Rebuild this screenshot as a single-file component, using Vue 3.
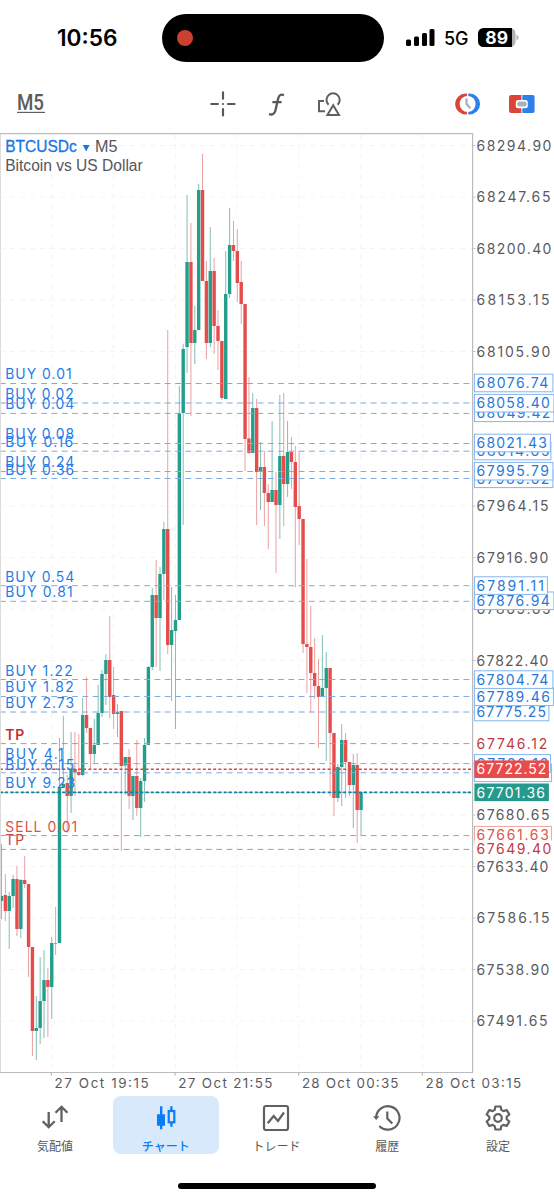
<script setup>
const STEP = 3.866
// direction, high, body top, body bottom, low
const raw = [
  ['g',844,896,901,919],['r',874,895,911,921],['g',892,896,911,949],['g',875,879,896,908],['r',866,879,929,936],
  ['g',879,880,929,938],['r',856,880,884,888],['r',884,884,947,977],['r',947,947,1031,1056],['g',996,1028,1031,1060],
  ['g',957,1001,1028,1044],['g',950,980,1001,1038],['r',968,980,987,1037],['g',937,943,987,1019],['r',907,943,943.6,955],
  ['g',738,787,943,943],['g',716,784,787,787],['r',775,783,796,833],['g',732,769,796,813],['r',732,769,772,796],
  ['r',734,772,775,776],['g',698,715,775,776],['r',677,715,728,733],['r',728,728,754,769],['g',719,745,754,763],
  ['g',685,713,745,745],['g',670,674,713,717],['g',654,660,674,705],['r',616,660,697,718],['r',667,695,714,729],
  ['g',704,712,714,737],['r',711,711,766,851],['g',757,757,765.5,795],['r',749,757,796,809],['g',776,776,796,820],
  ['r',740,776,808,816],['g',778,781,808,837],['g',738,745,781,802],['g',666,667,745,745],['g',588,595,667,670],
  ['r',560,595,618,667],['g',567,574,618,671],['g',522,529,574,600],['r',330,529,645,654],['g',587,630,645,701],
  ['g',595,620,631,729],['g',386,413,620,620],['g',344,349,413,525],['g',195,262,347,373],['r',223,262,343,416],
  ['g',306,330,343,364],['g',184,190,330,330],['r',154,190,281,281],['r',261,281,343,359],['g',227,271,343,347],
  ['r',258,271,326,354],['r',310,326,341,370],['r',341,341,398,400],['g',251,294,399,399],['g',208,245,294,298],
  ['r',221,245,251,261],['r',229,251,283,302],['r',261,282,304,324],['r',304,304,439,471],['r',377,438.5,453,454],
  ['g',393,408,453,453],['r',399,408,472,525],['g',442,467,472,510],['r',451,467,493,526],['r',484,493,502,549],
  ['g',421,490,502,502],['r',472,490,505,573],['g',395,456,505,539],['r',393,456,484,526],['g',421,452,484,497],
  ['r',437,452,462,489],['r',446,462,507,587],['r',451,506,519,545],['r',519,519,644,653],['r',559,644,647,693],
  ['r',606,647,673,712],['r',638,673,686,699],['r',659,686,697,748],['g',635,688,697,697],['g',652,668,688,761],
  ['r',668,668,733,796],['r',733,733,798,816],['g',764,767,798,802],['g',724,740,767,806],['r',733,740,762,798],
  ['r',762,762,785,796],['g',754,765,785,828],['r',753,765,810,843],['g',792,792,810,835]
]
const candles = raw.map(([d, h, t, b, l], i) => ({ d, h, t, b, l, x: 1.5 + i * STEP }))

const gridY = Array.from({ length: 18 }, (_, i) => 145.5 + i * 51.5)
const gridX = Array.from({ length: 7 }, (_, i) => 51.6 + i * 61.83)

const axis = [
  [145.5,'68294.90',74],[197,'68247.65',73],[248.5,'68200.40',74],[300,'68153.15',72],[351.5,'68105.90',73],
  [506,'67964.15',71],[557.5,'67916.90',71],[609,'67869.65',73],[660.5,'67822.40',71],[815,'67680.65',72],
  [866.5,'67633.40',71],[918,'67586.15',72],[969.5,'67538.90',72],[1021,'67491.65',70]
]
const times = [[54.6,94,'27 Oct 19:15'],[178.3,94,'27 Oct 21:55'],[302,96.5,'28 Oct 00:35'],[425.6,95.5,'28 Oct 03:15']]

const orders = [
  [383.5,'BUY 0.01',66.5,379],[403,'BUY 0.02',68.5,399.3],[413.4,'BUY 0.04',69,409],[443.5,'BUY 0.08',69,439],
  [451.2,'BUY 0.16',68,447],[471.5,'BUY 0.24',69,467],[478.5,'BUY 0.36',69,475],[585.7,'BUY 0.54',69,581.5],
  [601.3,'BUY 0.81',67.5,597],[679.5,'BUY 1.22',67.5,676],[696.5,'BUY 1.82',68.5,692],[712,'BUY 2.73',69,708],
  [763.6,'BUY 4.1',58.5,759],[772.8,'BUY 6.15',69,769.5],[792.4,'BUY 9.23',70,788]
]
const stops = [[743.6,'TP',19,739.5,'bold'],[835.6,'SELL 0.01',72,831.5,'sell'],[849.4,'TP',19,844.7,'']]

const tags = [
  [835.2,'67661.63',71.5,77,'sell'],[772.8,'67719.45',72,77,'buy'],[763.4,'67728.18',71,76,'buy'],
  [712,'67775.25',68.5,74.5,'buy'],[696.8,'67789.46',72.5,79,'buy'],[679.6,'67804.74',71,78.5,'buy'],
  [600.8,'67876.94',72.5,79.5,'buy'],[585.6,'67891.11',66.5,73,'buy'],[478.8,'67989.62',72,78.5,'buy'],
  [471.2,'67995.79',71.5,78.5,'buy'],[451,'68014.65',72,76.5,'buy'],[443,'68021.43',69.5,76,'buy'],
  [412.8,'68049.42',73,79.5,'buy'],[403.2,'68058.40',72.5,79.5,'buy'],[383,'68076.74',71,78.5,'buy'],
  [849.2,'67649.40',74,79,'plain'],[743.5,'67746.12',70,76,'plain'],[792.3,'67701.36',67.5,74.5,'bid'],[769.2,'67722.52',69,74.5,'ask']
]
const gear = 'M10.4 1.5h5.2l.7 3.4 2.1 1.2 3.3-1.1 2.6 4.5-2.6 2.3v2.4l2.6 2.3-2.6 4.5-3.3-1.1-2.1 1.2-.7 3.4h-5.2l-.7-3.4-2.1-1.2L4.3 21l-2.6-4.5 2.6-2.3v-2.4L1.7 9.5 4.3 5l3.3 1.1 2.1-1.2z'
</script>

<template>
  <main class="screen">
    <header class="status">
      <svg class="clock" width="64" height="24"><text x="0" y="19.8" textLength="60.5" lengthAdjust="spacingAndGlyphs">10:56</text></svg>
      <div class="island"><i></i></div>
      <svg class="signal" width="30" height="20"><rect x="0" y="12.5" width="5" height="6.5" rx="1.5"/><rect x="8" y="9.5" width="5" height="9.5" rx="1.5"/><rect x="16" y="6" width="5" height="13" rx="1.5"/><rect x="23.5" y="2" width="5" height="17" rx="1.5"/></svg>
      <svg class="net" width="26" height="20"><text x="0" y="15.8" textLength="24.5" lengthAdjust="spacingAndGlyphs">5G</text></svg>
      <svg class="battery" width="42" height="20"><path d="M31 0h1a5.5 5.5 0 0 1 5.5 5.5v8A5.5 5.5 0 0 1 32 19h-1z" fill="#b2b2b4"/><path d="M5.5 0H34v19H5.5A5.5 5.5 0 0 1 0 13.5v-8A5.5 5.5 0 0 1 5.5 0z"/><path d="M38.5 6.5q2 .8 2 3t-2 3z" fill="#b2b2b4"/><text x="7.3" y="15.8" textLength="22.7" lengthAdjust="spacingAndGlyphs">89</text></svg>
    </header>

    <nav class="tools">
      <svg class="frame" width="30" height="28"><text x="0" y="20" textLength="27" lengthAdjust="spacingAndGlyphs">M5</text><path d="M0 22.4h28" stroke="#606060" stroke-width="1.2"/></svg>
      <svg class="cross" width="28" height="28" fill="none" stroke="#58585a" stroke-width="2.2" stroke-linecap="round"><path d="M14 2.4v6.3M14 19.2v6.3M2.3 14h6.6M19 14h6.6"/><circle cx="14" cy="14" r="1.1" fill="#58585a" stroke="none"/></svg>
      <svg class="func" width="20" height="28" fill="none" stroke="#58585a" stroke-width="2.3"><path d="M16 5.1q-4.4-1.6-5.7 3L7.4 20.5q-1.2 5.2-6.4 3.6M4.4 12.2h9.2"/></svg>
      <svg class="shapes" width="28" height="28" fill="none" stroke="#606062" stroke-width="2"><path d="M8 11H3v10.3h6"/><path d="M12.6 14.8a6.6 6.6 0 1 1 9 0"/><path d="M17.2 15.2 23 25H11.4z"/></svg>
      <svg class="timer" width="28" height="28" fill="none"><path d="M12.9 3.6h-1.4a10.4 10.4 0 0 0 0 20.8h1.4" fill="#dc4439"/><path d="M14.3 3.6h1.4a10.4 10.4 0 0 1 0 20.8h-1.4z" fill="#2f80ea"/><circle cx="13.6" cy="14" r="8" fill="#fff"/><path d="M12.5 8.5v5.3l3.8 4.6" stroke="#a5b0ba" stroke-width="2.2"/></svg>
      <svg class="trade" width="28" height="28"><path d="M13.4 5H3.2Q1 5 1 7.2v13.6Q1 23 3.2 23h10.2z" fill="#dc4439"/><path d="M14.3 5h10.3q2 0 2 2v14q0 2-2 2H14.3z" fill="#2f80ea"/><rect x="7.8" y="10" width="12" height="8.2" rx="2.5" fill="#fff"/><rect x="9.2" y="11.6" width="9.4" height="5" rx="2" fill="#a5b3bf"/></svg>
    </nav>

    <svg class="chart" width="554" height="964" viewBox="0 130 554 964">
      <g class="grid">
        <path v-for="y in gridY" :key="'y' + y" :d="`M0 ${y}H472`" />
        <path v-for="x in gridX" :key="'x' + x" :d="`M${x} 134V1072`" />
      </g>
      <g v-for="(c, i) in candles" :key="i" :class="c.d">
        <path class="wick" :d="`M${c.x} ${c.h}V${c.l}`" />
        <rect :x="c.x - 1.7" :y="c.t" width="3.4" :height="c.b - c.t" />
      </g>
      <path v-for="o in orders" :key="'l' + o[0]" class="line buyline" :d="`M0 ${o[0]}H470`" />
      <path v-for="s in stops" :key="'s' + s[0]" class="line sellline" :d="`M0 ${s[0]}H470`" />
      <path class="dot ask" d="M0 769.3H472" />
      <path class="dot bid" d="M0 792.4H472" />
      <g class="label">
        <text v-for="o in orders" :key="'t' + o[0]" class="buytext" x="5.2" :y="o[3]" :textLength="o[2]">{{ o[1] }}</text>
        <text v-for="s in stops" :key="'u' + s[0]" class="stoptext" :class="s[4]" x="5.2" :y="s[3]" :textLength="s[2]">{{ s[1] }}</text>
      </g>
      <text class="symbol" x="5.2" y="152.2" textLength="71.5" lengthAdjust="spacingAndGlyphs">BTCUSDc</text>
      <path d="M82.8 145h6.8l-3.4 6.5z" fill="#1677e8" />
      <text class="caption" x="95" y="152.2" textLength="22.5" lengthAdjust="spacingAndGlyphs">M5</text>
      <text class="caption" x="5.2" y="171.2" textLength="137.5" lengthAdjust="spacingAndGlyphs">Bitcoin vs US Dollar</text>
      <path d="M.5 134V1072" stroke="#dcdcdc" fill="none" />
      <path d="M0 133.7H472.6V1072.5H0" stroke="#bcbcbe" stroke-width="1.2" fill="none" />
      <path v-for="y in gridY" :key="'k' + y" :d="`M473 ${y}h2.5`" stroke="#c4c4c6" />
      <text v-for="a in axis" :key="a[1]" class="axis" x="476.6" :y="a[0] + 5.2" :textLength="a[2] + 0.8">{{ a[1] }}</text>
      <g v-for="t in tags" :key="t[1]" class="tag" :class="t[4]">
        <rect x="474.4" :y="t[0] - 8.8" :width="t[3]" height="17.6" />
        <text class="axis" x="476.6" :y="t[0] + 5.2" :textLength="t[2] + 0.8">{{ t[1] }}</text>
      </g>
      <g v-for="t in times" :key="t[2]">
        <path :d="`M${t[0] - 3.3} 1073v2.6`" stroke="#a8a8aa" />
        <text class="time" :x="t[0]" y="1087.8" :textLength="t[1]">{{ t[2] }}</text>
      </g>
    </svg>

    <nav class="tabs">
      <a class="tab"><svg width="28" height="28" fill="none" stroke="#606062" stroke-width="2.3"><path d="M7.7 8v15M1.7 17.2l6 6 6-6M20.5 18V3M14.5 8.8l6-6 6 6"/></svg><span>気配値</span></a>
      <a class="tab active"><svg width="28" height="28"><path d="M8 2.2h2.4v8H13v11.6h-2.6v3.4H8v-3.4H5V10.2h3z" fill="#0a7cf4"/><path d="M19.4 2.2v5M19.4 18v4.7" stroke="#0a7cf4" stroke-width="2.3"/><rect x="16.7" y="7" width="5.6" height="11.3" fill="none" stroke="#0a7cf4" stroke-width="2.2"/></svg><span>チャート</span></a>
      <a class="tab"><svg width="28" height="28" fill="none" stroke="#606062" stroke-width="2.2"><rect x="2" y="2" width="24" height="24" rx="2"/><path d="M5.7 19.2l6-7.2 4.3 5 6-8.5"/></svg><span>トレード</span></a>
      <a class="tab"><svg width="28" height="28" fill="none" stroke="#606062" stroke-width="2.2"><path d="M3.1 14A11.7 11.7 0 1 1 6.3 22"/><path d="M14.3 7.5v7l5 5"/><path d="M0 12.2h6.4L3.2 16z" fill="#606062" stroke="none"/></svg><span>履歴</span></a>
      <a class="tab"><svg width="28" height="28" fill="none" stroke="#606062" stroke-width="2.2" stroke-linejoin="round"><g transform="translate(1 1)"><path :d="gear"/><circle cx="13" cy="13" r="3.8"/></g></svg><span>設定</span></a>
    </nav>
    <div class="home"></div>
  </main>
</template>

<style>
body { background: #fff; }
</style>
<style scoped>
.screen { width: 554px; height: 1200px; overflow: hidden; display: flex; flex-direction: column; background: #fff; font-family: Inter, "Noto Sans CJK JP", sans-serif; }
svg { flex: none; display: block; }
.status { height: 76px; flex: none; display: flex; align-items: center; box-sizing: border-box; padding-left: 57px; }
.clock text { font-size: 22.4px; font-weight: 600; }
.island { width: 222px; height: 48px; flex: none; margin-left: 41px; border-radius: 24px; background: #000; display: flex; align-items: center; }
.island i { width: 16px; height: 16px; margin-left: 15px; border-radius: 50%; background: #cc4032; }
.signal { margin-left: 22px; margin-top: -2px; }
.net { margin-left: 8px; margin-top: 2px; }
.net text { font-size: 18.4px; font-weight: 500; }
.battery { margin-left: 8px; margin-top: -1px; }
.battery text { font-size: 17.5px; font-weight: 700; fill: #fff; }
.tools { height: 54px; flex: none; display: flex; align-items: center; box-sizing: border-box; padding: 2px 0 0 17px; }
.frame text { font: 500 22px Roboto, sans-serif; fill: #5c5c5c; }
.cross { margin-left: 162px; }
.func { margin-left: 31px; }
.shapes { margin-left: 28px; }
.timer { margin-left: 110px; }
.trade { margin-left: 26px; }
.chart { font-family: Inter, sans-serif; }
.grid path { stroke: #f4f4f5; stroke-dasharray: 5 5; fill: none; }
.wick { stroke-width: 1; fill: none; }
.g rect { fill: #259d8b; }
.g .wick { stroke: #82bfb6; }
.r rect { fill: #e44d4c; }
.r .wick { stroke: #eba0a0; }
.line { fill: none; stroke-width: 1; stroke-dasharray: 5.8 4.5; }
.buyline { stroke: #7facde; }
.sellline { stroke: #dc8585; }
.dot { fill: none; stroke-width: 1.6; stroke-dasharray: 3 2.2; }
.dot.ask { stroke: #d64848; }
.dot.bid { stroke: #128092; }
.label text { font-size: 13.9px; }
.buytext { fill: #1f7ce6; }
.stoptext { fill: #c94343; }
.stoptext.bold { font-weight: 600; fill: #bf2f31; }
.stoptext.sell { fill: #d8544b; }
.symbol { font: 16px "Liberation Sans", sans-serif; fill: #1677e8; stroke: #1677e8; stroke-width: .3; }
.caption { font: 16px "Liberation Sans", sans-serif; fill: #55565d; }
.axis { font-size: 14px; fill: #5a5a5e; }
.time { font-size: 13.4px; fill: #5a5a5e; }
.tag rect { fill: #fff; stroke: #82b5f1; stroke-width: 1; }
.buy .axis { fill: #2878d7; }
.tag.sell rect { stroke: #eda39d; }
.sell .axis { fill: #dc554b; }
.tag.plain rect { stroke: none; }
.plain .axis { fill: #c23b3d; }
.tag.bid rect { fill: #259a8c; stroke: none; }
.tag.ask rect { fill: #e94b4b; stroke: none; }
.bid .axis, .ask .axis { fill: #fff; }
.tabs { height: 62px; flex: none; display: grid; grid-template-columns: repeat(5, 1fr); padding-top: 2px; box-sizing: border-box; }
.tab { display: flex; flex-direction: column; align-items: center; margin: 0 2.6px; height: 58px; padding-top: 8px; box-sizing: border-box; border-radius: 8px; color: #58585a; }
.tab svg { margin-left: -1px; }
.tab span { margin: 5px 0 0 -1px; font: 400 12px/18px "Noto Sans CJK JP", sans-serif; white-space: nowrap; }
.tab.active span { font-weight: 500; }
.active { background: #d9e9fc; color: #0a7cf4; }
.home { width: 198px; height: 6px; border-radius: 3px; background: #000; margin: 27px auto 0; flex: none; }
</style>
